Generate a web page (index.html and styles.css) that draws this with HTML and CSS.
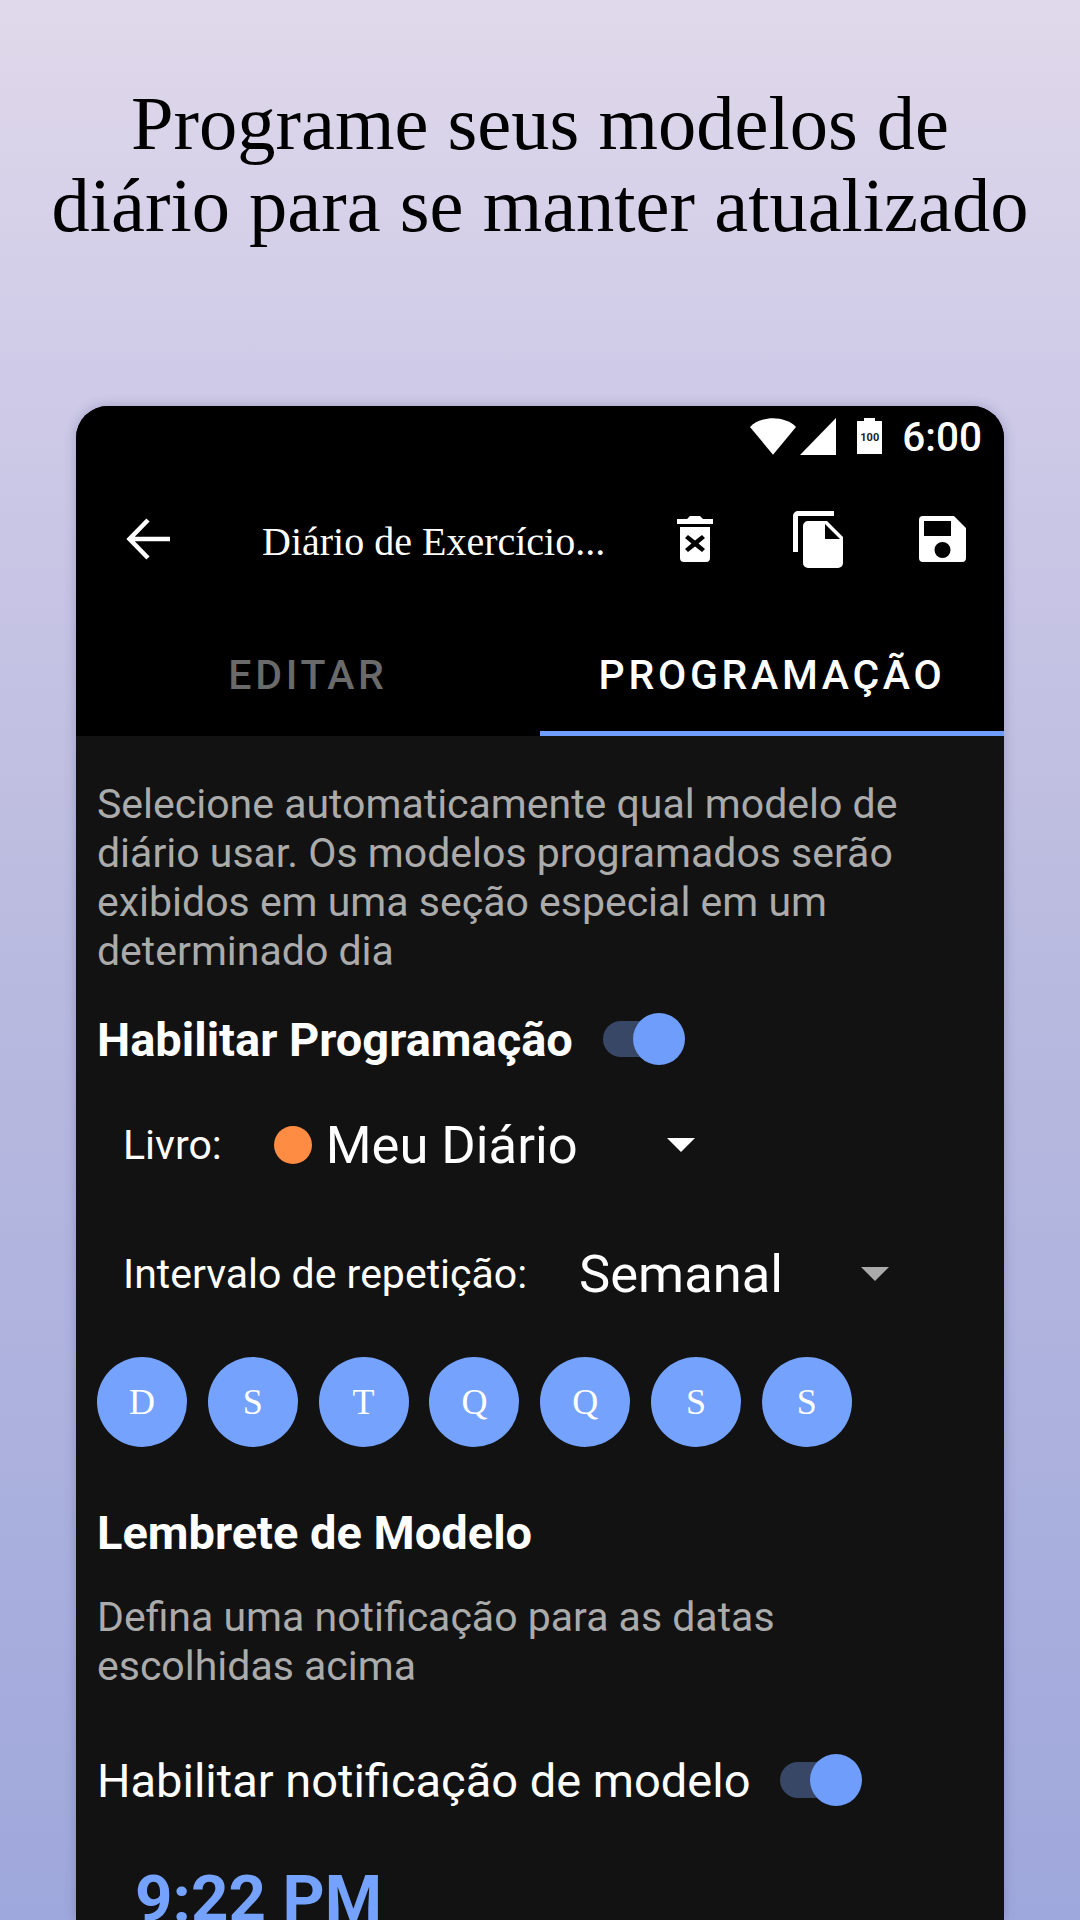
FILE: index.html
```html
<!DOCTYPE html>
<html lang="pt">
<head>
    <meta charset="UTF-8">
    <title>Programação</title>
    <link rel="stylesheet" href="styles.css">
</head>
<body>
    <h1 class="headline">Programe seus modelos de<br>diário para se manter atualizado</h1>

    <div class="phone">
        <div class="status-bar">
            <svg class="status-wifi" width="46" height="37" viewBox="0 0 48 38"><path fill="#fff" d="M0 9C6 3 15 0 24 0s18 3 24 9L24 38z"/></svg>
            <svg class="status-signal" width="36" height="37" viewBox="0 0 36 37"><path fill="#fff" d="M0 37 36 0v37z"/></svg>
            <div class="battery"><span>100</span></div>
            <span class="status-time">6:00</span>
        </div>

        <div class="toolbar">
            <svg class="back-icon" width="44" height="44" viewBox="0 0 44 44"><path fill="none" stroke="#fff" stroke-width="4.5" d="M44 22H5M22 3 3.500 22 22 41"/></svg>
            <div class="toolbar-title">Diário de Exercício...</div>
            <svg class="trash-icon" width="36" height="46" viewBox="0 0 36 46">
                <path fill="#fff" fill-rule="evenodd" d="M0 3h10l3-3h10l3 3h10v5H0zM3 11h30v31a4 4 0 0 1-4 4H7a4 4 0 0 1-4-4zM11 19l-3 3 6.500 5.500L8 33l3 3 7-5.500 7 5.500 3-3-6.500-5.500L28 22l-3-3-7 5.500z"/>
            </svg>
            <svg class="copy-icon" width="50" height="57" viewBox="0 0 50 57">
                <path fill="#fff" d="M5 0h36v5H5v36H0V5a5 5 0 0 1 5-5zM15 10h19l16 16v26a5 5 0 0 1-5 5H15a5 5 0 0 1-5-5V15a5 5 0 0 1 5-5z"/>
                <path fill="#000" d="M32 13v15h15z"/>
            </svg>
            <svg class="save-icon" width="47" height="46" viewBox="0 0 47 46">
                <path fill="#fff" fill-rule="evenodd" d="M4 0h31l12 12v30a4 4 0 0 1-4 4H4a4 4 0 0 1-4-4V4a4 4 0 0 1 4-4zM5 5v15h27V5zM23.500 26a8 8 0 1 0 0 16 8 8 0 0 0 0-16z"/>
            </svg>
        </div>

        <div class="tabs">
            <div class="tab">EDITAR</div>
            <div class="tab tab-active">PROGRAMAÇÃO</div>
        </div>

        <div class="content">
            <p class="hint">Selecione automaticamente qual modelo de diário usar. Os modelos programados serão exibidos em uma seção especial em um determinado dia</p>

            <div class="row row-schedule">
                <span class="section-title">Habilitar Programação</span>
                <div class="switch"><div class="switch-thumb"></div></div>
            </div>

            <div class="row row-book">
                <span class="label label-book">Livro:</span>
                <span class="book-dot"></span>
                <span class="value value-book">Meu Diário</span>
                <span class="arrow"></span>
            </div>

            <div class="row row-interval">
                <span class="label label-interval">Intervalo de repetição:</span>
                <span class="value value-interval">Semanal</span>
                <span class="arrow arrow-grey"></span>
            </div>

            <div class="days">
                <div class="day">D</div>
                <div class="day">S</div>
                <div class="day">T</div>
                <div class="day">Q</div>
                <div class="day">Q</div>
                <div class="day">S</div>
                <div class="day">S</div>
            </div>

            <div class="section-title reminder-title">Lembrete de Modelo</div>
            <p class="hint reminder-hint">Defina uma notificação para as datas escolhidas acima</p>

            <div class="row row-notify">
                <span class="notify-label">Habilitar notificação de modelo</span>
                <div class="switch"><div class="switch-thumb"></div></div>
            </div>

            <div class="time">9:22 PM</div>
        </div>
    </div>
</body>
</html>
```

FILE: styles.css
```css
html, body {
    margin: 0;
    height: 1920px;
    overflow: hidden;
}

body {
    width: 1080px;
    font-family: Roboto, sans-serif;
    background: linear-gradient(180deg, #e0d9eb 0%, #cdc9e7 22%, #b9badf 50%, #9fa8dc 100%);
}

.headline {
    margin: 0;
    padding-top: 83px;
    height: 406px;
    box-sizing: border-box;
    font-family: "Liberation Serif", serif;
    font-weight: 400;
    font-size: 76.500px;
    line-height: 82px;
    text-align: center;
    color: #000;
    white-space: nowrap;
}

.phone {
    margin-left: 76px;
    width: 928px;
    height: 1514px;
    background: #121212;
    border-radius: 32px 32px 0 0;
    box-shadow: 0 0 12px rgba(60, 60, 120, 0.3);
    overflow: hidden;
}

.status-bar {
    height: 64px;
    padding: 12px 22px 0 0;
    box-sizing: border-box;
    background: #000;
    display: flex;
    justify-content: flex-end;
    align-items: flex-start;
    color: #fff;
}

.status-wifi { margin-right: 4px; }
.status-signal { margin-right: 21px; }

.battery {
    width: 25px;
    height: 33px;
    margin-top: 3px;
    margin-right: 20px;
    background: #fff;
    position: relative;
    display: flex;
    align-items: center;
    justify-content: center;
}

.battery::before {
    content: '';
    position: absolute;
    top: -3px;
    left: 7px;
    width: 11px;
    height: 3px;
    background: #fff;
}

.battery span {
    font-size: 11px;
    font-weight: 700;
    color: #222;
}

.status-time {
    font-size: 40.500px;
    font-weight: 500;
    line-height: 38px;
}

.toolbar {
    height: 138px;
    background: #000;
    display: flex;
    align-items: center;
    color: #fff;
}

.back-icon { margin-left: 50px; }

.toolbar-title {
    margin-left: 92px;
    width: 345px;
    padding-top: 4px;
    font-family: "Liberation Serif", serif;
    font-size: 40px;
    white-space: nowrap;
}

.trash-icon { margin-left: 70px; }
.copy-icon { margin-left: 80px; }
.save-icon { margin-left: 76px; }

.tabs {
    height: 128px;
    background: #000;
    display: flex;
}

.tab {
    width: 464px;
    height: 128px;
    padding-top: 6px;
    box-sizing: border-box;
    display: flex;
    align-items: center;
    justify-content: center;
    font-size: 41px;
    font-weight: 500;
    letter-spacing: 3.700px;
    color: #6a6a6a;
}

.tab-active {
    color: #fff;
    box-shadow: inset 0 -5px 0 #6e9dfb;
}

.content {
    padding: 0 21px;
}

.hint {
    margin: 0;
    max-width: 840px;
    padding-top: 44px;
    font-size: 41px;
    line-height: 49px;
    color: #ababab;
}

.row {
    display: flex;
    align-items: center;
}

.row-schedule {
    margin-top: 23px;
    height: 80px;
}

.section-title {
    font-size: 47px;
    font-weight: 700;
    color: #fff;
}

.switch {
    position: relative;
    width: 68px;
    height: 36px;
    margin-left: 30px;
    border-radius: 18px;
    background: #384765;
}

.switch-thumb {
    position: absolute;
    top: -8px;
    right: -14px;
    width: 52px;
    height: 52px;
    border-radius: 50%;
    background: #6e9dfb;
}

.row-book {
    margin-top: 26px;
    height: 80px;
    padding-left: 26px;
}

.label {
    font-size: 41px;
    color: #fff;
}

.book-dot {
    width: 38px;
    height: 38px;
    margin-left: 52px;
    border-radius: 50%;
    background: #ff8c42;
}

.value {
    font-size: 52.500px;
    color: #fff;
}

.value-book { margin-left: 14px; width: 341px; }

.arrow {
    width: 0;
    height: 0;
    border-left: 14px solid transparent;
    border-right: 14px solid transparent;
    border-top: 14px solid #fff;
}

.arrow-grey { border-top-color: #aaa; }

.row-interval {
    margin-top: 49px;
    height: 80px;
    padding-left: 26px;
}

.value-interval { margin-left: 52px; width: 282px; }

.days {
    margin-top: 43px;
    display: flex;
    gap: 20.800px;
}

.day {
    width: 90px;
    height: 90px;
    border-radius: 50%;
    background: #75a2fd;
    display: flex;
    align-items: center;
    justify-content: center;
    font-family: "Liberation Serif", serif;
    font-size: 36px;
    color: #fff;
}

.reminder-title {
    margin-top: 60px;
    line-height: 52px;
}

.reminder-hint {
    padding-top: 34px;
}

.row-notify {
    margin-top: 59px;
    height: 60px;
}

.notify-label {
    font-size: 47px;
    color: #fff;
}

.time {
    margin-top: 54px;
    padding-left: 38px;
    font-size: 65.500px;
    font-weight: 700;
    line-height: 70px;
    color: #75a2fd;
}
```
